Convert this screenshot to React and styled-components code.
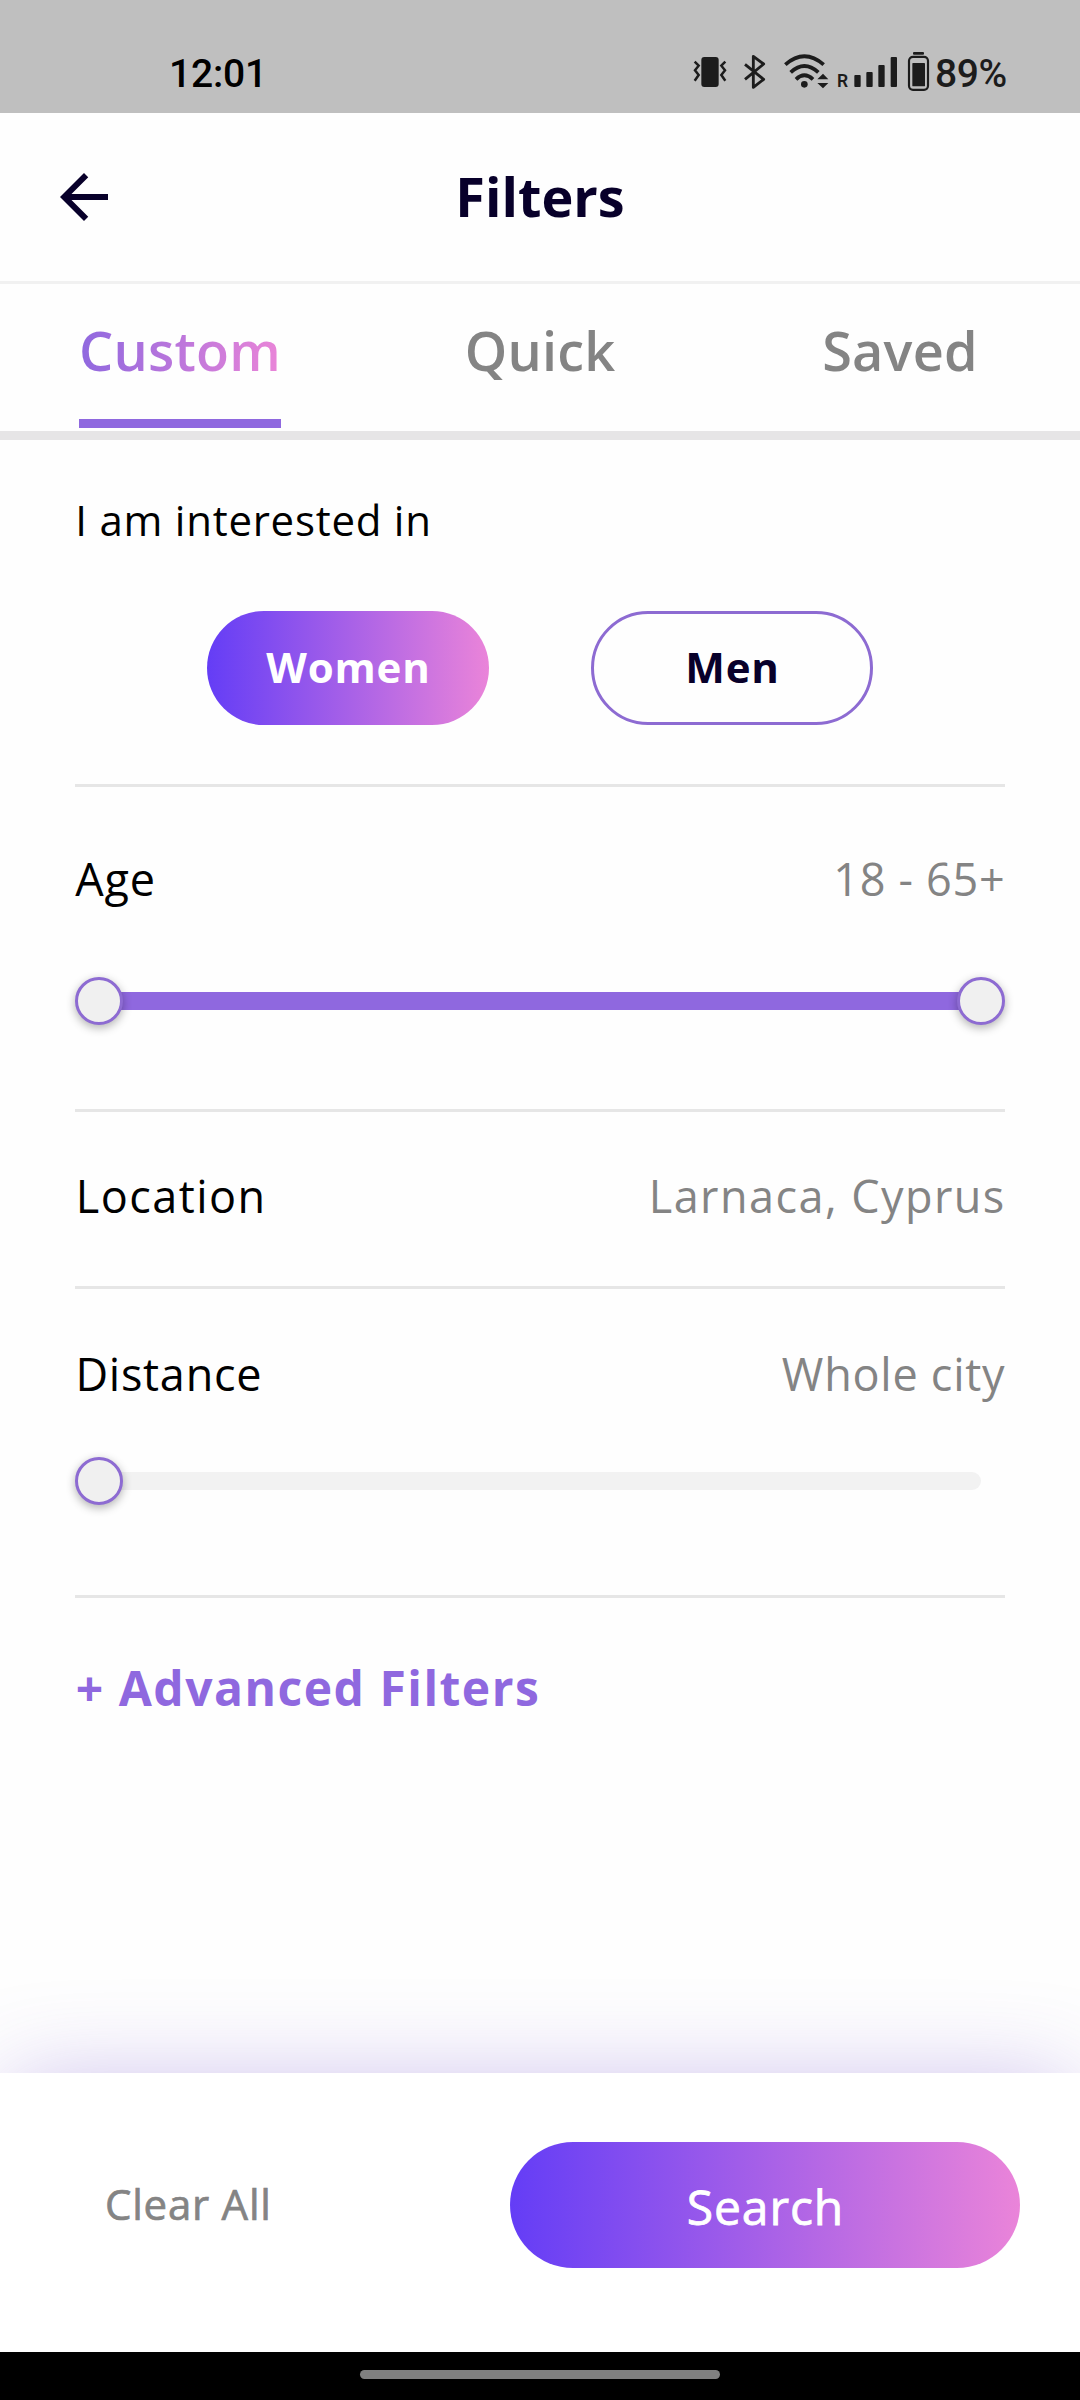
import React from "react";
import styled, { createGlobalStyle, css } from "styled-components";

const GlobalStyle = createGlobalStyle`
  * { box-sizing: border-box; }
  html, body { margin: 0; padding: 0; background: #fefefe; }
  body { font-family: "Open Sans", "Noto Sans", sans-serif; }
  button { font: inherit; border: 0; background: none; padding: 0; margin: 0; }
`;

const brandGradient = "linear-gradient(90deg, #643df6 0%, #ea84d9 100%)";

/* Tracking is split evenly between both sides of the run. */
const tracked = (value) => css`
  letter-spacing: ${value}px;
  margin-left: ${value / 2}px;
  margin-right: ${-value / 2}px;
`;

/* Medium weight, built from the regular face with a thin outline. */
const medium = (outline, color) => css`
  font-weight: 400;
  -webkit-text-stroke: ${outline}px ${color};
`;

const Screen = styled.div`
  width: 1080px;
  height: 2400px;
  display: flex;
  flex-direction: column;
  background: #fefefe;
  overflow: hidden;
`;

const StatusBar = styled.div`
  height: 113px;
  flex: none;
  display: flex;
  justify-content: space-between;
  padding: 50px 72px 0 169px;
  background: #bfbfbf;
  font-family: Roboto, sans-serif;
`;

const Clock = styled.div`
  padding-top: 1px;
  font-size: 39px;
  line-height: 46px;
  font-weight: 500;
  letter-spacing: -0.2px;
  color: #000;
`;

const StatusIcons = styled.div`
  display: flex;
  align-items: flex-start;
  color: #1c1c1c;
  height: 46px;
`;

const StatusGlyph = styled.svg`
  display: block;
  flex: none;
  height: 46px;
  width: ${(p) => p.$width}px;
`;

const Roaming = styled.span`
  width: 17px;
  font-size: 17.5px;
  line-height: 20px;
  font-weight: 600;
  padding: 21px 0 0 5px;
`;

const Percent = styled.span`
  padding-top: 1px;
  font-size: 39px;
  line-height: 46px;
  font-weight: 500;
  letter-spacing: -0.4px;
  width: 73px;
  white-space: nowrap;
`;

const Header = styled.header`
  height: 171px;
  flex: none;
  display: grid;
  grid-template-columns: 168px 1fr 168px;
  align-items: center;
  border-bottom: 3px solid #f1f1f1;
`;

const BackButton = styled.button`
  width: 72px;
  height: 72px;
  margin-left: 48px;
`;

const Title = styled.h1`
  margin: 0;
  padding-bottom: 3px;
  text-align: center;
  font-size: 54px;
  line-height: 74px;
  font-weight: 700;
  color: #08002a;
`;

const Tabs = styled.nav`
  height: 156px;
  flex: none;
  display: grid;
  grid-template-columns: repeat(3, 1fr);
  justify-items: center;
  padding-top: 29px;
  border-bottom: 9px solid #e6e5e6;
`;

const Tab = styled.button`
  height: 115px;
  display: flex;
  align-items: flex-start;
  font-size: 54px;
  line-height: 74px;
  font-weight: 600;
  letter-spacing: 0.2px;
  color: #848484;
  border-bottom: 9px solid ${(p) => (p.$active ? "#8f68df" : "transparent")};
`;

const TabLabel = styled.span`
  ${(p) =>
    p.$active &&
    css`
      background: linear-gradient(90deg, #8f68df 0%, #ea85d8 100%);
      background-clip: text;
      -webkit-background-clip: text;
      color: transparent;
    `}
`;

const Content = styled.main`
  flex: 1;
  padding: 0 75px;
  display: flex;
  flex-direction: column;
`;

const Section = styled.section`
  flex: none;
  height: ${(p) => p.$height}px;
  padding-top: ${(p) => p.$top}px;
  border-bottom: 3px solid ${(p) => (p.$last ? "transparent" : "#e6e6e6")};
`;

const Prompt = styled.div`
  font-size: 42px;
  line-height: 56px;
  color: #000;
  ${tracked(0.74)}
`;

const PillRow = styled.div`
  display: flex;
  justify-content: center;
  gap: 102px;
  margin-top: 63px;
`;

const Pill = styled.button`
  width: 282px;
  height: 114px;
  padding: 0 0 2px 1px;
  border-radius: 57px;
  font-size: 42px;
  line-height: 56px;
  font-weight: 700;
  letter-spacing: 0.8px;
  ${(p) =>
    p.$selected
      ? css`
          background: ${brandGradient};
          color: #fff;
        `
      : css`
          border: 3px solid #8d6bd2;
          color: #08002a;
        `}
`;

const Row = styled.div`
  display: flex;
  justify-content: space-between;
  font-size: 45px;
  line-height: 62px;
  > span { ${(p) => tracked(p.$spacing)} }
`;

const Label = styled.span`
  color: #000;
`;

const Value = styled.span`
  color: #848484;
`;

const Slider = styled.div`
  display: grid;
  align-items: center;
  height: 48px;
  margin-top: ${(p) => p.$top}px;
  > * { grid-area: 1 / 1; }
`;

const Rail = styled.div`
  height: 18px;
  margin: 0 24px;
  border-radius: 9px;
  background: ${(p) => (p.$filled ? "#8f68df" : "#f2f2f2")};
`;

const Thumb = styled.div`
  width: 48px;
  height: 48px;
  border-radius: 50%;
  border: 3px solid #8d6bd2;
  background: #f0f0f0;
  box-shadow: 0 3px 10px rgba(0, 0, 0, 0.3);
  justify-self: ${(p) => (p.$end ? "end" : "start")};
`;

const Advanced = styled.button`
  display: block;
  font-size: 48px;
  line-height: 66px;
  font-weight: 700;
  color: #8f68df;
  ${tracked(1.5)}
`;

const ActionBar = styled.footer`
  height: 279px;
  flex: none;
  display: flex;
  justify-content: space-between;
  align-items: flex-start;
  padding: 69px 60px 0 105px;
  background: #fff;
  box-shadow: 0 0 94px -10px rgba(100, 61, 200, 0.34);
`;

const ClearButton = styled.button`
  height: 126px;
  padding-bottom: 3px;
  font-size: 42px;
  letter-spacing: 0.76px;
  color: #848484;
  ${medium(0.7, "#848484")}
`;

const SearchButton = styled.button`
  width: 510px;
  height: 126px;
  padding: 3px 0 0 1px;
  border-radius: 63px;
  background: ${brandGradient};
  font-size: 48px;
  letter-spacing: 0.9px;
  color: #fff;
  ${medium(0.8, "#fff")}
`;

const NavBar = styled.div`
  height: 48px;
  flex: none;
  display: flex;
  justify-content: center;
  align-items: flex-start;
  padding-top: 18px;
  background: #000;
  z-index: 1;
`;

const Handle = styled.div`
  width: 360px;
  height: 9px;
  border-radius: 4.5px;
  background: #808080;
`;

function VibrateIcon() {
  return (
    <StatusGlyph $width={50} viewBox="90 60 150 138">
      <rect x="124" y="81" width="52" height="90" rx="9" fill="currentColor" />
      <g fill="none" stroke="currentColor" strokeWidth="7.5">
        <path d="M104 95l12 12-11 14 11 14-12 17" />
        <path d="M196 95l-12 12 11 14-11 14 12 17" />
      </g>
    </StatusGlyph>
  );
}

function BluetoothIcon() {
  return (
    <StatusGlyph $width={40} viewBox="240 60 120 138">
      <path
        d="M255 103l56 45-31 24V79l31 23-56 46"
        fill="none"
        stroke="currentColor"
        strokeWidth="8.5"
        strokeLinejoin="round"
      />
    </StatusGlyph>
  );
}

function WifiIcon() {
  return (
    <StatusGlyph $width={52} viewBox="360 60 156 138">
      <g fill="none" stroke="currentColor" strokeWidth="11.5">
        <path d="M376 104q57-50 115 0" />
        <path d="M392 127q41-38 83 0" />
        <path d="M408 148q25-24 51 0" />
      </g>
      <circle cx="433" cy="163" r="10" fill="currentColor" />
      <path d="M472 148l17-17 16 17zM472 159h33l-16 16z" fill="currentColor" />
    </StatusGlyph>
  );
}

function SignalIcon() {
  return (
    <StatusGlyph $width={51} viewBox="567 60 153 138" fill="currentColor">
      <rect x="583" y="135" width="19" height="36" rx="3" />
      <rect x="619" y="126" width="19" height="45" rx="3" />
      <rect x="655" y="105" width="19" height="66" rx="3" />
      <rect x="692" y="81" width="19" height="90" rx="3" />
    </StatusGlyph>
  );
}

function BatteryIcon() {
  return (
    <StatusGlyph $width={35} viewBox="720 60 105 138" fill="currentColor">
      <rect x="759" y="66" width="33" height="8" rx="3" />
      <rect
        x="747"
        y="80.5"
        width="57"
        height="99"
        rx="12"
        fill="none"
        stroke="currentColor"
        strokeWidth="6.5"
      />
      <rect x="757" y="99" width="38" height="70" rx="2" />
    </StatusGlyph>
  );
}

export default function App() {
  return (
    <>
      <GlobalStyle />
      <Screen>
        <StatusBar>
          <Clock>12:01</Clock>
          <StatusIcons>
            <VibrateIcon />
            <BluetoothIcon />
            <WifiIcon />
            <Roaming>R</Roaming>
            <SignalIcon />
            <BatteryIcon />
            <Percent>89%</Percent>
          </StatusIcons>
        </StatusBar>

        <Header>
          <BackButton aria-label="Back">
            <svg width="72" height="72" viewBox="0 0 24 24" fill="#08002a">
              <path d="M20 11H7.83l5.59-5.59L12 4l-8 8 8 8 1.41-1.41L7.83 13H20v-2z" />
            </svg>
          </BackButton>
          <Title>Filters</Title>
        </Header>

        <Tabs>
          <Tab $active>
            <TabLabel $active>Custom</TabLabel>
          </Tab>
          <Tab>
            <TabLabel>Quick</TabLabel>
          </Tab>
          <Tab>
            <TabLabel>Saved</TabLabel>
          </Tab>
        </Tabs>

        <Content>
          <Section $height={347} $top={52}>
            <Prompt>I am interested in</Prompt>
            <PillRow>
              <Pill $selected>Women</Pill>
              <Pill>Men</Pill>
            </PillRow>
          </Section>

          <Section $height={325} $top={61}>
            <Row $spacing={0.7}>
              <Label>Age</Label>
              <Value>18 - 65+</Value>
            </Row>
            <Slider $top={67}>
              <Rail $filled />
              <Thumb />
              <Thumb $end />
            </Slider>
          </Section>

          <Section $height={177} $top={53}>
            <Row $spacing={1.45}>
              <Label>Location</Label>
              <Value>Larnaca, Cyprus</Value>
            </Row>
          </Section>

          <Section $height={309} $top={54}>
            <Row $spacing={0.75}>
              <Label>Distance</Label>
              <Value>Whole city</Value>
            </Row>
            <Slider $top={52}>
              <Rail />
              <Thumb />
            </Slider>
          </Section>

          <Section $height={200} $top={57} $last>
            <Advanced>+ Advanced Filters</Advanced>
          </Section>
        </Content>

        <ActionBar>
          <ClearButton>Clear All</ClearButton>
          <SearchButton>Search</SearchButton>
        </ActionBar>
        <NavBar>
          <Handle />
        </NavBar>
      </Screen>
    </>
  );
}
